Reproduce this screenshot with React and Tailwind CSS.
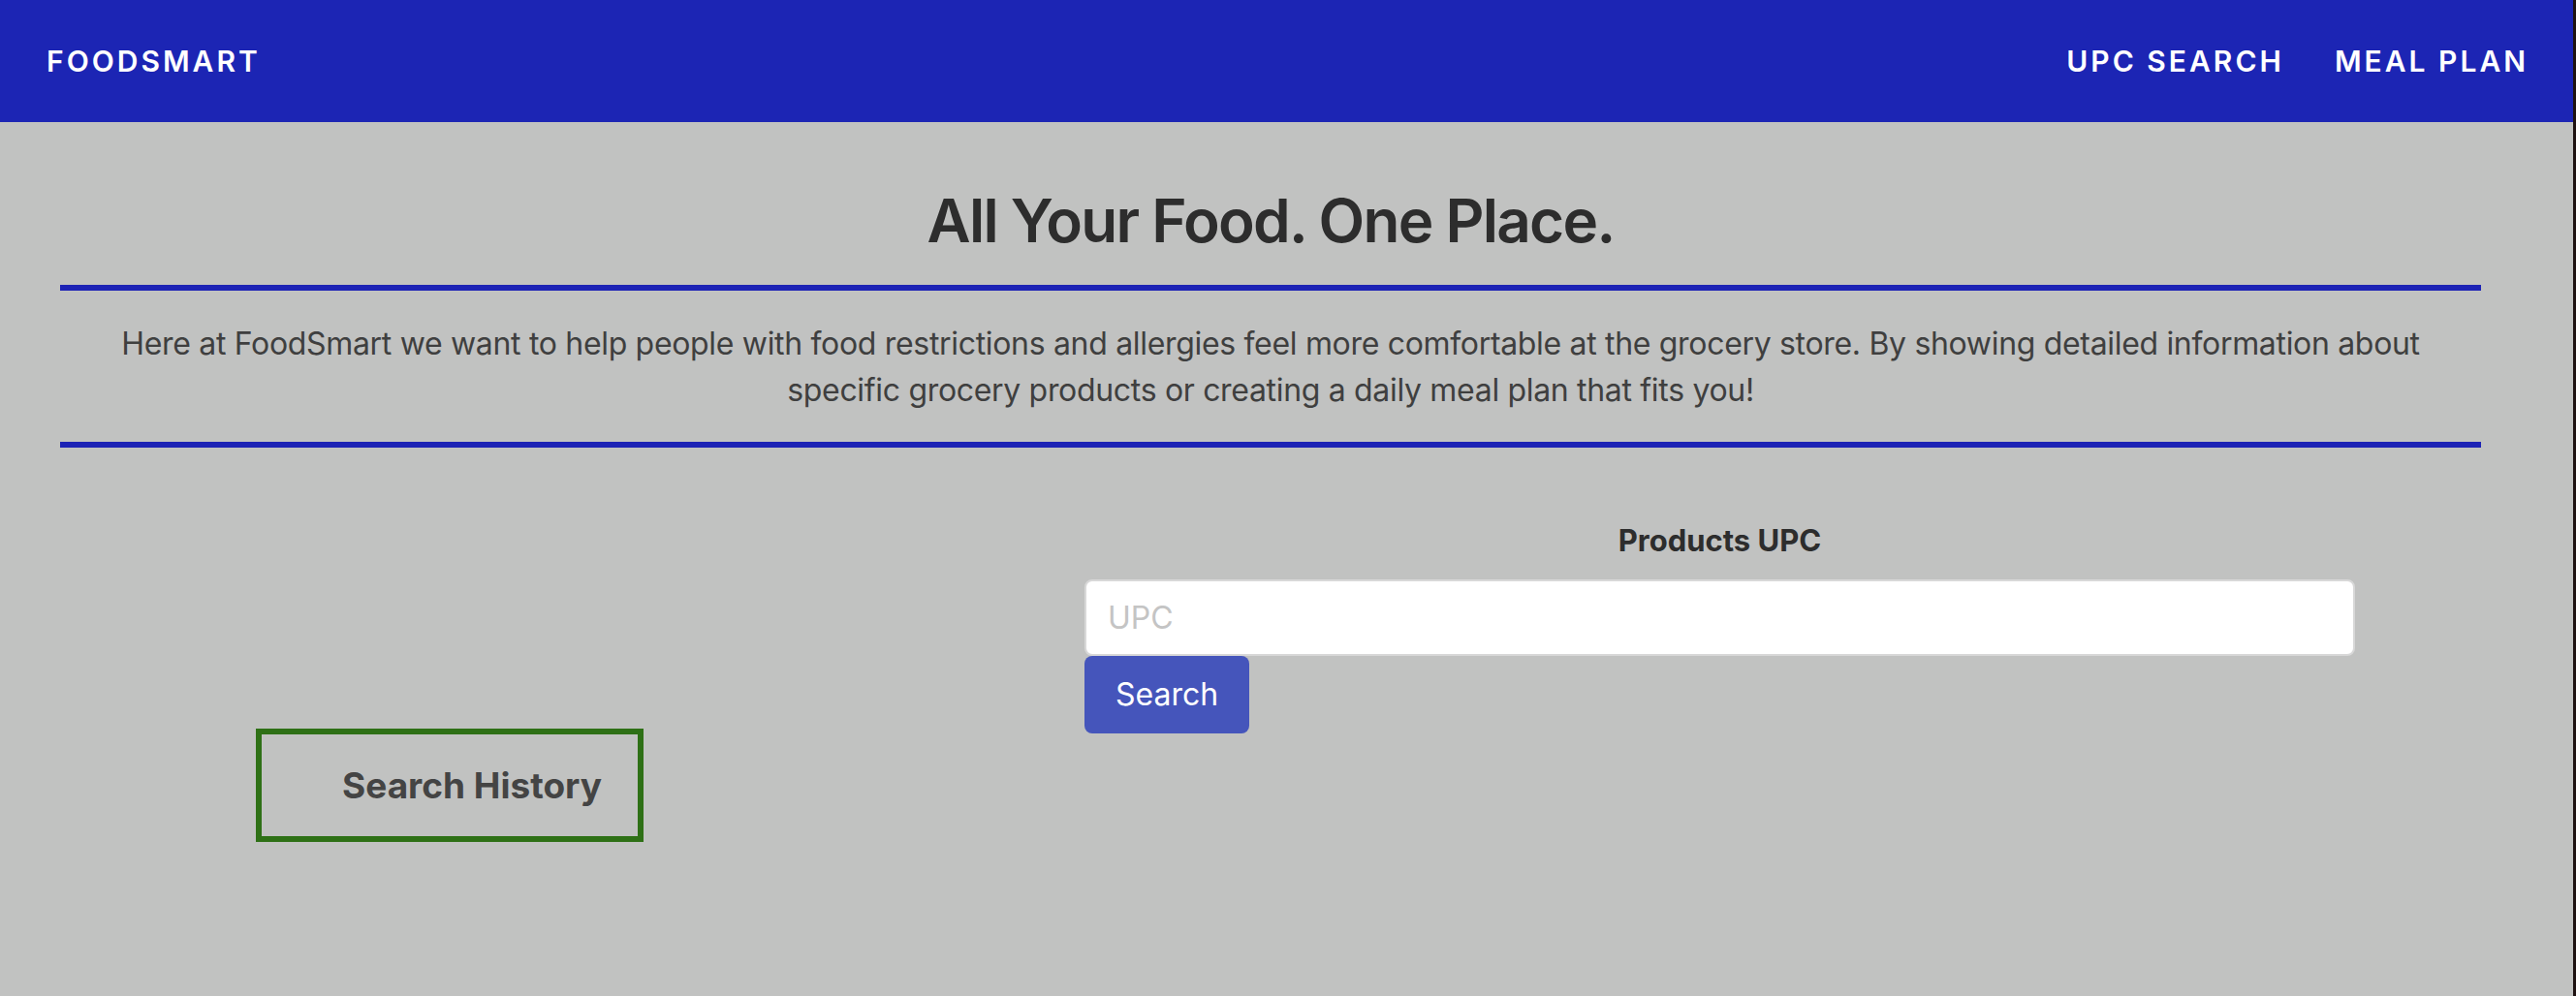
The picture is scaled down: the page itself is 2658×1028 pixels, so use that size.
import React, { useState } from 'react';

const NAV_LINKS = ['UPC SEARCH', 'MEAL PLAN'];

const Header = () => (
  <header className="h-[126px] bg-[#1c25b4] flex items-center justify-between pl-[48px] pr-[46px] text-white">
    <a className="text-[30px] font-semibold tracking-[0.1em] leading-[36px]">FOODSMART</a>
    <nav className="flex items-center gap-[52px]">
      {NAV_LINKS.map((link) => (
        <a key={link} className="text-[30px] font-semibold tracking-[0.1em] leading-[36px]">
          {link}
        </a>
      ))}
    </nav>
  </header>
);

const App = () => {
  const [upc, setUpc] = useState('');

  return (
    <div
      className="min-h-screen bg-[#c1c2c1] border-r-[3px] border-[#1e1212] text-[#3d3d3d]"
      style={{ fontFamily: 'Inter, "Noto Sans", sans-serif' }}
    >
      <Header />

      {/* --- intro --- */}
      <section className="pl-[62px] pr-[95px]">
        <h1 className="mt-[64px] text-center text-[62px] leading-[75px] font-semibold text-[#2d2d2d] tracking-[-0.028em]">
          All Your Food. One Place.
        </h1>
        <div className="mt-[29px] h-[6px] bg-[#1c22b5]"></div>
        <p className="mt-[31px] px-[40px] text-center text-[32px] leading-[48px] text-[#3f3f3f] tracking-[-0.01em]">
          Here at FoodSmart we want to help people with food restrictions and allergies feel more comfortable at the grocery store. By showing detailed information about specific grocery products or creating a daily meal plan that fits you!
        </p>
        <div className="mt-[29px] h-[6px] bg-[#1c22b5]"></div>
      </section>

      {/* --- search + history --- */}
      <section className="flex">
        <div className="w-[1119px] shrink-0 pl-[264px] pt-[290px]">
          <div className="w-[400px] h-[117px] border-[6px] border-[#2e7016] flex items-center pl-[83px]">
            <h2 className="text-[37px] font-bold text-[#444444] leading-[48px]">Search History</h2>
          </div>
        </div>
        <div className="w-[1311px] pt-[77px]">
          <label className="block text-center text-[31px] font-bold text-[#2d2d2d] leading-[38px]">
            Products UPC
          </label>
          <input
            value={upc}
            onChange={(e) => setUpc(e.target.value)}
            placeholder="UPC"
            className="mt-[21px] block w-full h-[79px] bg-white rounded-[8px] border-2 border-[#d8d8d8] px-[22px] text-[32px] text-[#333] placeholder:text-[#c4c4c4] outline-none"
          />
          <button className="block h-[80px] px-[32px] rounded-[8px] bg-[#4555bb] text-white text-[32px]">
            Search
          </button>
        </div>
      </section>
    </div>
  );
};

export default App;
